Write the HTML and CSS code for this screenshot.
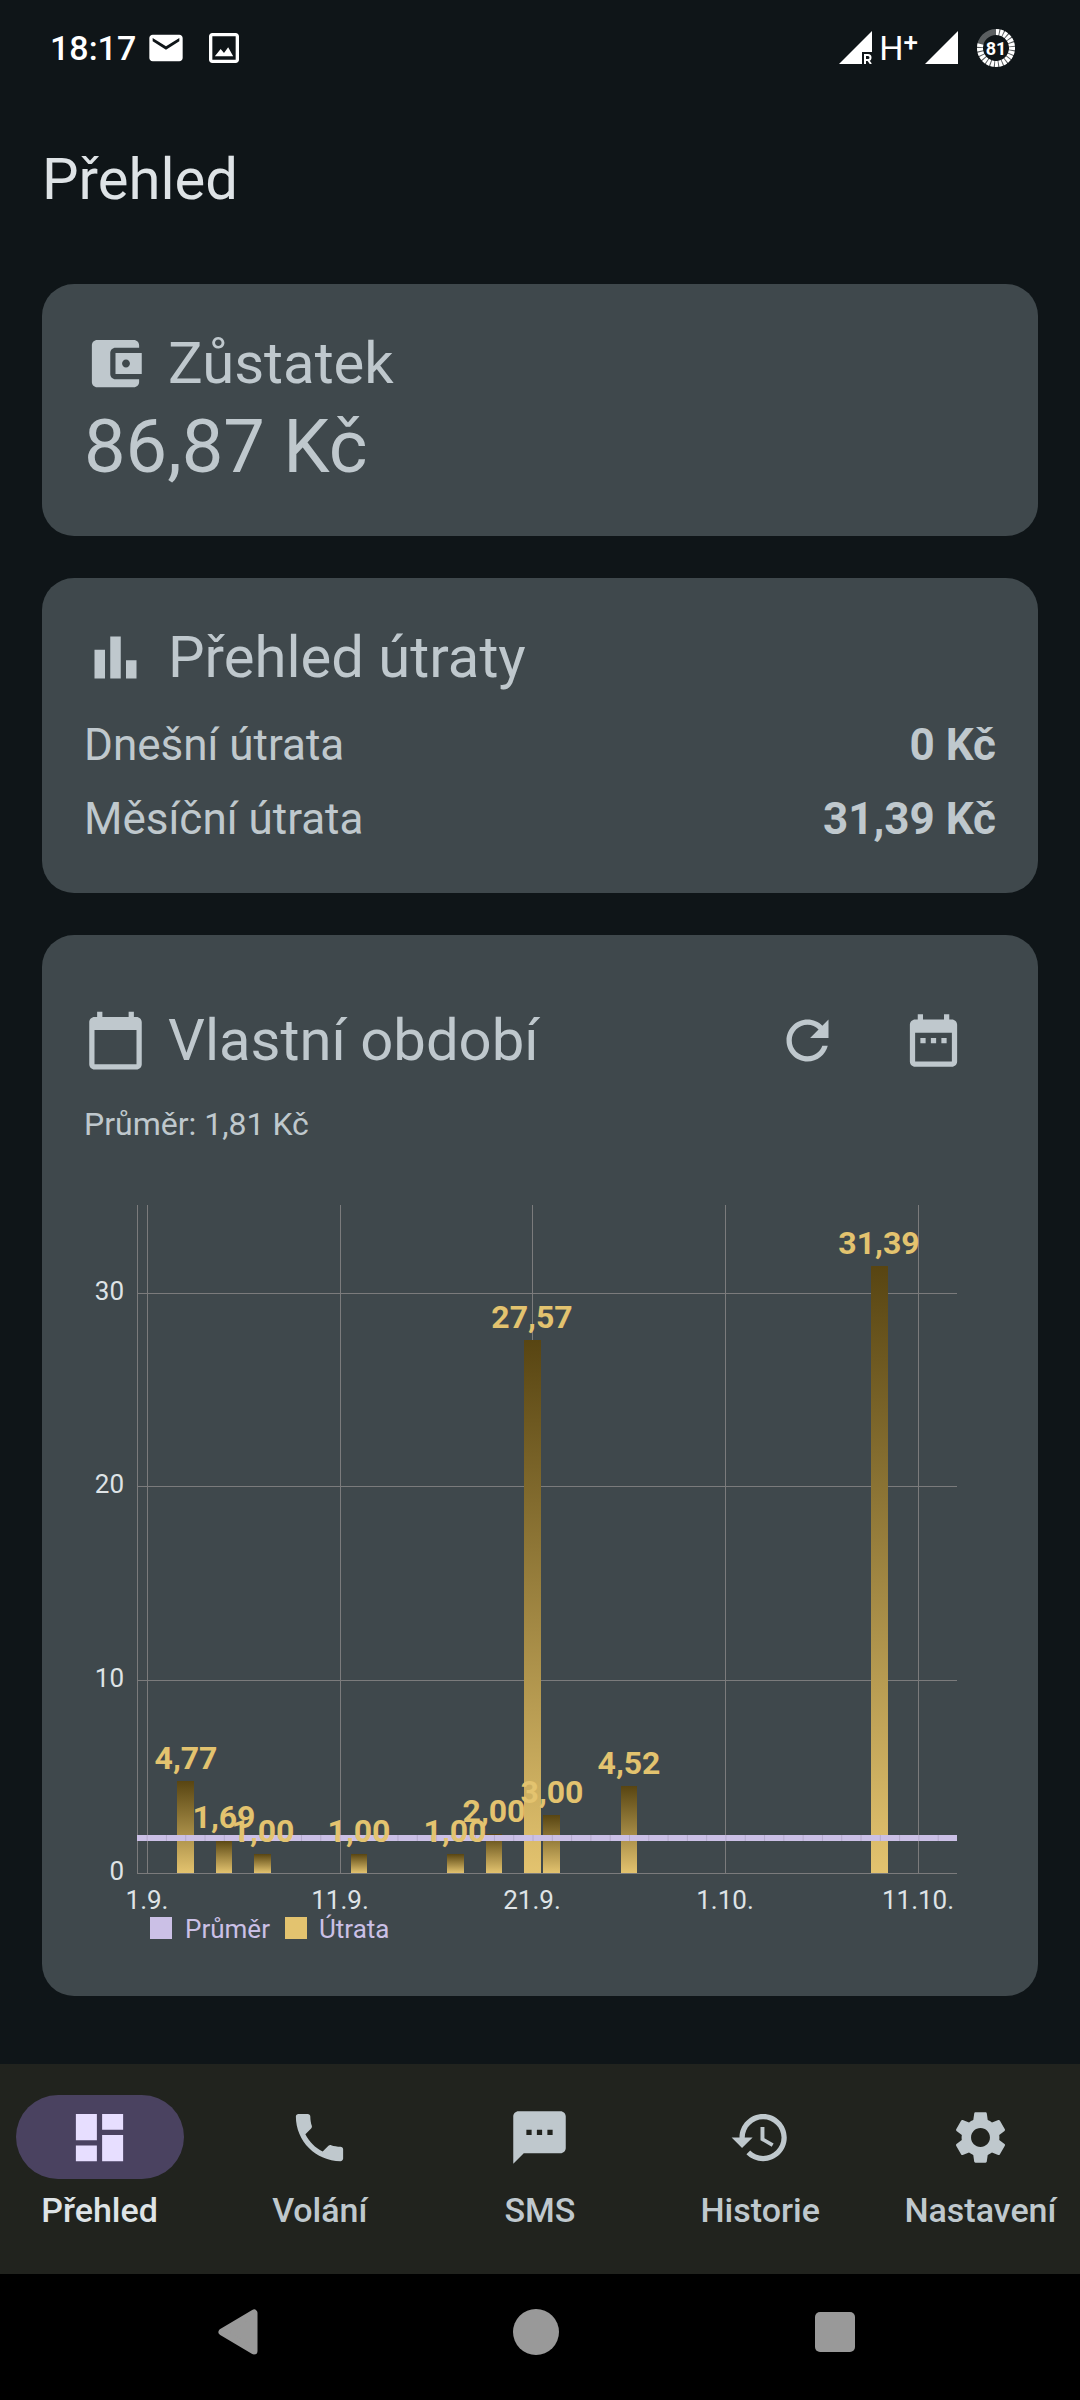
FILE: index.html
```
<!DOCTYPE html>
<html lang="cs">
  <head>
    <meta charset="UTF-8">
    <meta name="viewport" content="width=device-width, initial-scale=1.0">
    <title>Přehled</title>
    <link rel="stylesheet" href="styles.css">
  </head>
  <body>
    <div class="app">
      <div class="status-bar">
        <div class="status-left">
          <span class="status-time">18:17</span>
          <svg class="status-icon" viewBox="0 0 24 24"><path d="M20 4H4c-1.1 0-2 .9-2 2v12c0 1.1.9 2 2 2h16c1.1 0 2-.9 2-2V6c0-1.1-.9-2-2-2zm0 4l-8 5-8-5V6l8 5 8-5v2z"/></svg>
          <svg class="status-icon" viewBox="0 0 24 24"><path d="M19 5v14H5V5h14m0-2H5c-1.1 0-2 .9-2 2v14c0 1.1.9 2 2 2h14c1.1 0 2-.9 2-2V5c0-1.1-.9-2-2-2z"/><path d="M14.5 11.5l-2.5 3.5-2-2.4L6.5 17h11z"/></svg>
        </div>
        <div class="status-right">
          <svg class="signal" viewBox="0 0 33 33"><path d="M33 0v21H23v12H0z"/><path class="roaming" d="M26 33v-9h3a2.5 2.5 0 0 1 0 5h-3m3 0l3 4"/></svg>
          <span class="network">H<sup>+</sup></span>
          <svg class="signal" viewBox="0 0 33 33"><path d="M33 0v33H0z"/></svg>
          <svg class="battery" viewBox="0 0 38 38">
            <circle class="battery-track" cx="19" cy="19" r="16"/>
            <circle class="battery-level" cx="19" cy="19" r="16" pathLength="100"/>
            <text x="19" y="26">81</text>
          </svg>
        </div>
      </div>

      <header>
        <h1>Přehled</h1>
      </header>

      <main>
        <section class="card">
          <div class="card-header">
            <svg class="icon" viewBox="0 0 24 24"><path d="M21 18v1c0 1.1-.9 2-2 2H5c-1.11 0-2-.9-2-2V5c0-1.1.89-2 2-2h14c1.1 0 2 .9 2 2v1h-9c-1.11 0-2 .9-2 2v8c0 1.1.89 2 2 2h9zm-9-2h10V8H12v8zm4-2.5c-.83 0-1.5-.67-1.5-1.5s.67-1.5 1.5-1.5 1.5.67 1.5 1.5-.67 1.5-1.5 1.5z"/></svg>
            <h2>Zůstatek</h2>
          </div>
          <p class="balance">86,87 Kč</p>
        </section>

        <section class="card">
          <div class="card-header">
            <svg class="icon" viewBox="0 0 24 24"><path d="M4 9h4v11H4zM16 13h4v7h-4zM10 4h4v16h-4z"/></svg>
            <h2>Přehled útraty</h2>
          </div>
          <dl class="spend">
            <div class="spend-row">
              <dt>Dnešní útrata</dt>
              <dd>0 Kč</dd>
            </div>
            <div class="spend-row">
              <dt>Měsíční útrata</dt>
              <dd>31,39 Kč</dd>
            </div>
          </dl>
        </section>

        <section class="card">
          <div class="card-header">
            <svg class="icon" viewBox="0 0 24 24"><path d="M20 3h-1V1h-2v2H7V1H5v2H4c-1.1 0-2 .9-2 2v16c0 1.1.9 2 2 2h16c1.1 0 2-.9 2-2V5c0-1.1-.9-2-2-2zm0 18H4V8h16v13z"/></svg>
            <h2>Vlastní období</h2>
            <button class="icon-button" type="button" aria-label="Obnovit">
              <svg class="icon" viewBox="0 0 24 24"><path d="M17.65 6.35C16.2 4.9 14.21 4 12 4c-4.42 0-7.99 3.58-7.99 8s3.57 8 7.99 8c3.73 0 6.84-2.55 7.73-6h-2.08c-.82 2.33-3.04 4-5.65 4-3.31 0-6-2.69-6-6s2.69-6 6-6c1.66 0 3.14.69 4.22 1.78L13 11h7V4l-2.35 2.35z"/></svg>
            </button>
            <button class="icon-button" type="button" aria-label="Vybrat období">
              <svg class="icon" viewBox="0 0 24 24"><path d="M9 11H7v2h2v-2zm4 0h-2v2h2v-2zm4 0h-2v2h2v-2zM19 4h-1V2h-2v2H8V2H6v2H5c-1.11 0-2 .9-2 2v14c0 1.1.89 2 2 2h14c1.1 0 2-.9 2-2V6c0-1.1-.9-2-2-2zm0 16H5V9h14v11z"/></svg>
            </button>
          </div>
          <p class="average">Průměr: 1,81 Kč</p>

          <svg class="chart" viewBox="0 0 912 774" role="img" aria-label="Útrata po dnech">
            <defs>
              <linearGradient id="bar" x1="0" y1="0" x2="0" y2="1">
                <stop offset="0" stop-color="#584512"/>
                <stop offset="1" stop-color="#e3c36f"/>
              </linearGradient>
            </defs>

            <path class="grid" d="M53 113H873M53 306H873M53 500H873M53 693H873M53 25V693M63 25V693M256 25V693M448 25V693M641 25V693M834 25V693"/>

            <g class="axis axis-y">
              <text x="40" y="120">30</text>
              <text x="40" y="313">20</text>
              <text x="40" y="507">10</text>
              <text x="40" y="700">0</text>
            </g>
            <g class="axis axis-x">
              <text x="63" y="729">1.9.</text>
              <text x="256" y="729">11.9.</text>
              <text x="448" y="729">21.9.</text>
              <text x="641" y="729">1.10.</text>
              <text x="834" y="729">11.10.</text>
            </g>

            <g fill="url(#bar)">
              <rect x="93" y="601" width="17" height="92"/>
              <rect x="132" y="660" width="16" height="33"/>
              <rect x="170" y="674" width="17" height="19"/>
              <rect x="267" y="674" width="16" height="19"/>
              <rect x="363" y="674" width="17" height="19"/>
              <rect x="402" y="654" width="16" height="39"/>
              <rect x="440" y="160" width="17" height="533"/>
              <rect x="459" y="635" width="17" height="58"/>
              <rect x="537" y="606" width="16" height="87"/>
              <rect x="787" y="86" width="17" height="607"/>
            </g>

            <!-- average, one segment per day -->
            <path class="avg-line" d="M53 658H873"/>
            <path class="avg-joints" d="M53 658H873" pathLength="4250"/>

            <g class="values">
              <text x="102" y="589">4,77</text>
              <text x="140" y="648">1,69</text>
              <text x="179" y="662">1,00</text>
              <text x="275" y="662">1,00</text>
              <text x="371" y="662">1,00</text>
              <text x="410" y="642">2,00</text>
              <text x="448" y="148">27,57</text>
              <text x="468" y="623">3,00</text>
              <text x="545" y="594">4,52</text>
              <text x="795" y="74">31,39</text>
            </g>

            <g class="legend">
              <rect x="66" y="737" width="22" height="22"/>
              <text x="101" y="758">Průměr</text>
              <rect class="legend-spend" x="201" y="737" width="22" height="22"/>
              <text x="235" y="758">Útrata</text>
            </g>
          </svg>
        </section>
      </main>

      <nav class="tabs">
        <a class="tab active" href="#prehled" aria-current="page">
          <span class="tab-icon"><svg class="icon" viewBox="0 0 24 24"><path d="M3 13h8V3H3v10zm0 8h8v-6H3v6zm10 0h8V11h-8v10zm0-18v6h8V3h-8z"/></svg></span>
          <span>Přehled</span>
        </a>
        <a class="tab" href="#volani">
          <span class="tab-icon"><svg class="icon" viewBox="0 0 24 24"><path d="M20 15.5c-1.25 0-2.45-.2-3.57-.57-.35-.11-.74-.03-1.02.24l-2.2 2.2c-2.83-1.44-5.15-3.75-6.59-6.59l2.2-2.21c.28-.26.36-.65.25-1C8.7 6.45 8.5 5.25 8.5 4c0-.55-.45-1-1-1H4c-.55 0-1 .45-1 1 0 9.39 7.61 17 17 17 .55 0 1-.45 1-1v-3.5c0-.55-.45-1-1-1z"/></svg></span>
          <span>Volání</span>
        </a>
        <a class="tab" href="#sms">
          <span class="tab-icon"><svg class="icon" viewBox="0 0 24 24"><path d="M20 2H4c-1.1 0-2 .9-2 2v18l4-4h14c1.1 0 2-.9 2-2V4c0-1.1-.9-2-2-2zM9 11H7V9h2v2zm4 0h-2V9h2v2zm4 0h-2V9h2v2z"/></svg></span>
          <span>SMS</span>
        </a>
        <a class="tab" href="#historie">
          <span class="tab-icon"><svg class="icon" viewBox="0 0 24 24"><path d="M13 3c-4.97 0-9 4.03-9 9H1l3.89 3.89.07.14L9 12H6c0-3.87 3.13-7 7-7s7 3.13 7 7-3.13 7-7 7c-1.93 0-3.68-.79-4.94-2.06l-1.42 1.42C8.27 19.99 10.51 21 13 21c4.97 0 9-4.03 9-9s-4.03-9-9-9zm-1 5v5l4.28 2.54.72-1.21-3.5-2.08V8H12z"/></svg></span>
          <span>Historie</span>
        </a>
        <a class="tab" href="#nastaveni">
          <span class="tab-icon"><svg class="icon" viewBox="0 0 24 24"><path d="M19.14 12.94c.04-.3.06-.61.06-.94 0-.32-.02-.64-.07-.94l2.03-1.58c.18-.14.23-.41.12-.61l-1.92-3.32c-.12-.22-.37-.29-.59-.22l-2.39.96c-.5-.38-1.03-.7-1.62-.94l-.36-2.54c-.04-.24-.24-.41-.48-.41h-3.84c-.24 0-.43.17-.47.41l-.36 2.54c-.59.24-1.13.57-1.62.94l-2.39-.96c-.22-.08-.47 0-.59.22L2.74 8.87c-.12.21-.08.47.12.61l2.03 1.58c-.05.3-.09.63-.09.94s.02.64.07.94l-2.03 1.58c-.18.14-.23.41-.12.61l1.92 3.32c.12.22.37.29.59.22l2.39-.96c.5.38 1.03.7 1.62.94l.36 2.54c.05.24.24.41.48.41h3.84c.24 0 .44-.17.47-.41l.36-2.54c.59-.24 1.13-.56 1.62-.94l2.39.96c.22.08.47 0 .59-.22l1.92-3.32c.12-.22.07-.47-.12-.61l-2.01-1.58zM12 15.6c-1.98 0-3.6-1.62-3.6-3.6s1.62-3.6 3.6-3.6 3.6 1.62 3.6 3.6-1.62 3.6-3.6 3.6z"/></svg></span>
          <span>Nastavení</span>
        </a>
      </nav>

      <div class="system-bar">
        <button type="button" aria-label="Zpět"><svg viewBox="0 0 48 48"><path d="M41 5v38L9 24z" stroke="#999" stroke-width="7" stroke-linejoin="round"/></svg></button>
        <button type="button" aria-label="Domů"><svg viewBox="0 0 48 48"><circle cx="24" cy="24" r="23"/></svg></button>
        <button type="button" aria-label="Poslední aplikace"><svg viewBox="0 0 48 48"><rect x="4" y="4" width="40" height="40" rx="5"/></svg></button>
      </div>
    </div>
  </body>
</html>
```
FILE: styles.css
```
* {
  margin: 0;
  padding: 0;
  box-sizing: border-box;
}
body {
  background: #0f1518;
  color: #bfc8cd;
  font-family: Roboto, "Noto Sans", sans-serif;
}
svg {
  display: block;
  fill: currentColor;
}
button {
  border: 0;
  background: none;
  color: inherit;
  cursor: pointer;
}
.app {
  min-height: 100vh;
  display: flex;
  flex-direction: column;
}

/* status bar */
.status-bar {
  height: 95px;
  padding: 0 65px 0 50px;
  display: flex;
  align-items: center;
  justify-content: space-between;
  color: #fff;
}
.status-left {
  display: flex;
  align-items: center;
}
.status-time {
  min-width: 96px;
  font-size: 34px;
  font-weight: 500;
}
.status-icon {
  width: 40px;
  height: 40px;
}
.status-icon + .status-icon {
  margin-left: 18px;
}
.status-right {
  display: flex;
  align-items: center;
}
.signal {
  width: 33px;
  height: 33px;
}
.roaming {
  fill: none;
  stroke: currentColor;
  stroke-width: 2;
}
.network {
  display: flex;
  width: 53px;
  justify-content: center;
  font-size: 34px;
  line-height: 40px;
}
.network sup {
  font-size: 26px;
  font-weight: 500;
  line-height: 28px;
}
.battery {
  width: 38px;
  height: 38px;
  margin-left: 19px;
}
.battery circle {
  fill: none;
  stroke-width: 6;
}
.battery-track {
  stroke: #5b5f61;
}
.battery-level {
  stroke: #fff;
  stroke-dasharray: 3 1 3 1 3 1 3 1 3 1 3 1 3 1 3 1 3 1 3 1 3 1 3 1 3 1 3 1 3 1 3 1 3 1 3 1 3 1 3 22;
  transform: rotate(-90deg);
  transform-origin: center;
}
.battery text {
  font-size: 18px;
  font-weight: 700;
  text-anchor: middle;
}

/* page */
header {
  height: 168px;
  padding: 0 42px;
  display: flex;
  align-items: center;
}
h1, h2 {
  font-size: 58px;
  font-weight: 400;
  line-height: 74px;
}
h1 {
  color: #dee3e6;
}
main {
  flex: 1;
  padding: 21px 42px 68px;
  display: flex;
  flex-direction: column;
  gap: 42px;
}
.card {
  padding: 42px;
  border-radius: 32px;
  background: #3f484c;
}
.card-header {
  display: flex;
  align-items: center;
}
.card-header h2 {
  flex: 1;
  margin-left: 21px;
}
.icon {
  width: 63px;
  height: 63px;
  flex: none;
}
.icon-button {
  width: 126px;
  height: 126px;
  display: flex;
  align-items: center;
  justify-content: center;
}
.balance {
  font-size: 74px;
  line-height: 94px;
}
.spend {
  margin-top: 20px;
  display: flex;
  flex-direction: column;
  gap: 11px;
}
.spend-row {
  display: flex;
  justify-content: space-between;
  font-size: 44px;
  line-height: 63px;
}
.spend-row dd {
  font-weight: 700;
}
.average {
  font-size: 32px;
  line-height: 42px;
}

/* chart */
.chart {
  width: 100%;
  height: auto;
  margin-top: 35px;
}
.grid {
  fill: none;
  stroke: #7b7b7c;
  stroke-width: 1;
  shape-rendering: crispEdges;
}
.axis {
  font-size: 26px;
  fill: #dee3e6;
}
.axis-y {
  text-anchor: end;
}
.axis-x {
  text-anchor: middle;
}
.avg-line, .avg-joints {
  fill: none;
  stroke: #cbc0e6;
  stroke-width: 6;
}
.avg-joints {
  stroke: #b5abcd;
  stroke-dasharray: 5 95;
  stroke-dashoffset: -50;
}
.values {
  font-size: 32px;
  font-weight: 700;
  text-anchor: middle;
  fill: #e3c36f;
}
.legend {
  font-size: 26px;
  fill: #cbc0e6;
}
.legend-spend {
  fill: #e3c36f;
}

/* bottom navigation */
.tabs {
  height: 210px;
  padding-top: 31px;
  display: grid;
  grid-template-columns: repeat(5, 1fr);
  gap: 21px;
  background: #21231e;
}
.tab {
  display: flex;
  flex-direction: column;
  align-items: center;
  gap: 10px;
  color: #bfc8cd;
  font-size: 34px;
  font-weight: 500;
  line-height: 42px;
  text-decoration: none;
}
.tab-icon {
  width: 168px;
  height: 84px;
  border-radius: 42px;
  display: flex;
  align-items: center;
  justify-content: center;
}
.tab.active {
  color: #dee3e6;
}
.active .tab-icon {
  background: #4a4260;
  color: #e7deff;
}

.system-bar {
  height: 126px;
  padding-right: 8px;
  display: flex;
  align-items: center;
  justify-content: center;
  background: #000;
  color: #999;
}
.system-bar button {
  width: 299px;
  height: 100%;
  padding-bottom: 10px;
  display: flex;
  align-items: center;
  justify-content: center;
}
.system-bar svg {
  width: 48px;
  height: 48px;
}
```
